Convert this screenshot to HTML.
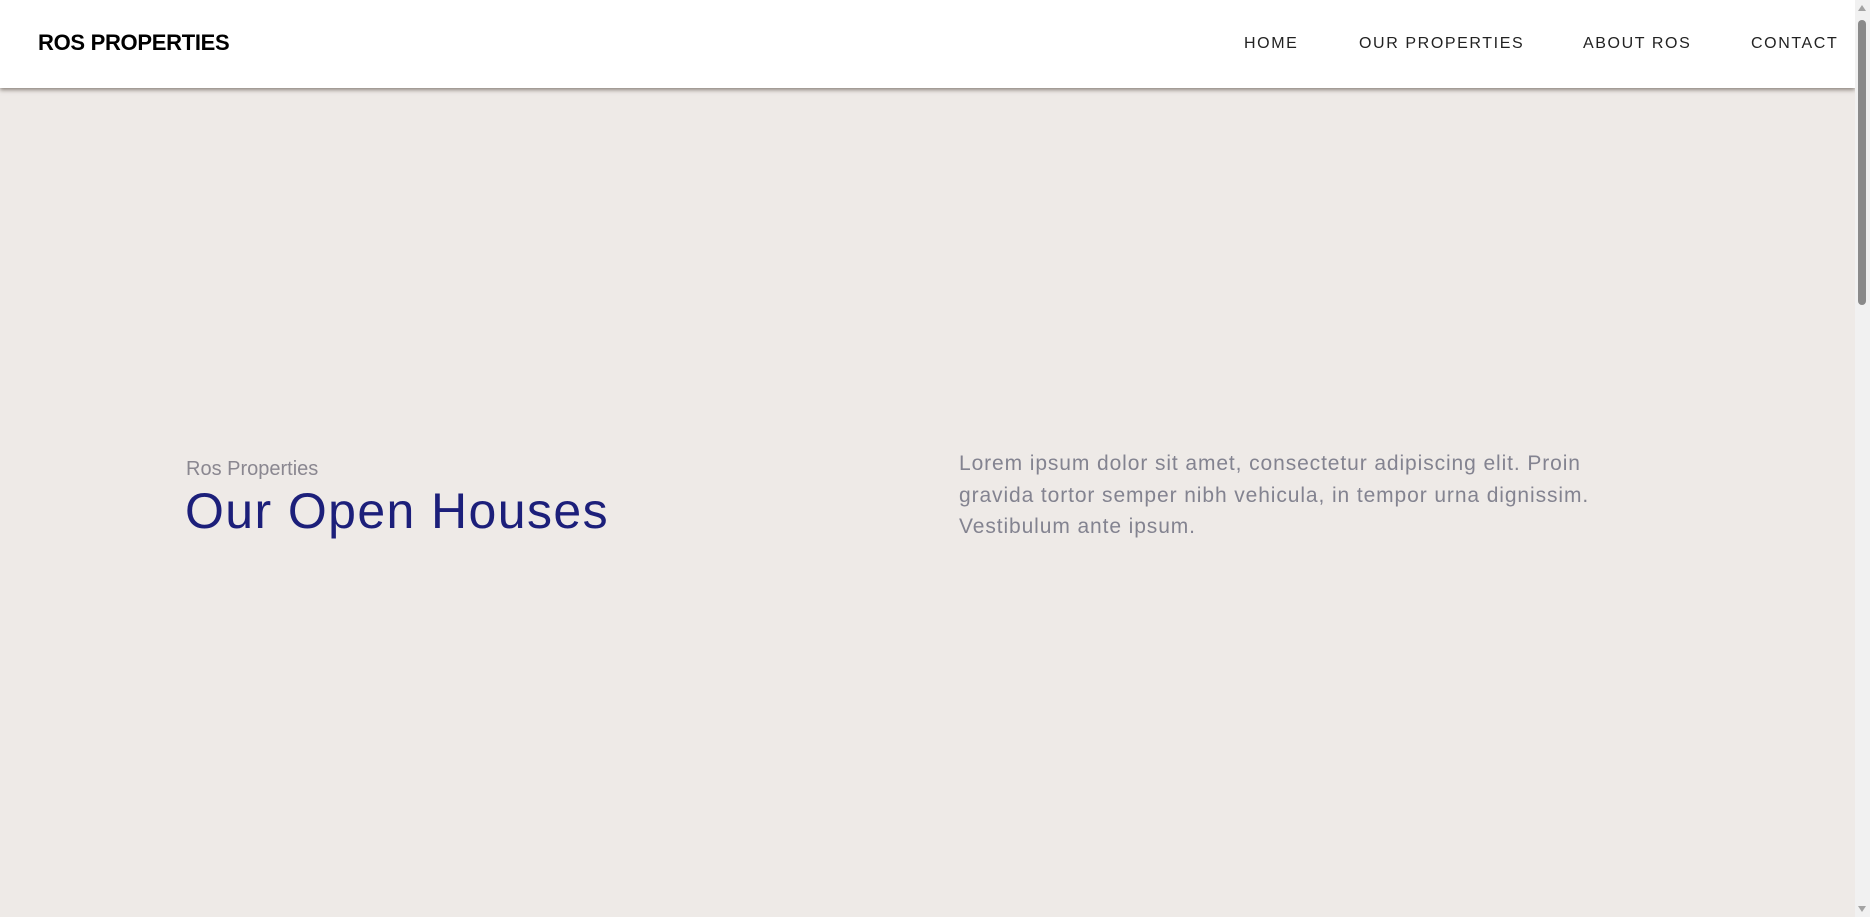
<!DOCTYPE html>
<html><head><style>
html,body{margin:0;padding:0}
body{width:1870px;height:917px;overflow:hidden;background:#eeeae7;font-family:"Liberation Sans",sans-serif;position:relative}
.hdr{position:absolute;left:0;top:0;width:1855px;height:88px;background:#fff;box-shadow:0 2px 4px rgba(60,50,40,.55)}
.logo{position:absolute;left:38px;top:30px;font-size:22px;font-weight:bold;color:#000;letter-spacing:-0.3px}
.nav{position:absolute;top:35px;font-size:16px;letter-spacing:1.6px;color:#222}
.sb{position:absolute;left:1855px;top:0;width:15px;height:917px;background:#f1f1f1}
.thumb{position:absolute;left:3px;top:20px;width:8px;height:285px;background:#8a8a8a;border-radius:4px}
.up{position:absolute;left:3px;top:5px;width:0;height:0;border-left:4px solid transparent;border-right:4px solid transparent;border-bottom:6px solid #a3a3a3}
.dn{position:absolute;left:3px;top:906px;width:0;height:0;border-left:4px solid transparent;border-right:4px solid transparent;border-top:6px solid #a3a3a3}
.sub{position:absolute;left:186px;top:458px;font-size:20px;color:#8a8790}
.h1{position:absolute;left:185px;top:482px;font-size:50px;color:#1c1f7a;letter-spacing:1.4px;font-weight:normal}
.p{position:absolute;left:959px;top:448px;width:800px;font-size:21px;line-height:31.6px;color:#838390;letter-spacing:0.9px;white-space:nowrap}
</style></head><body>
<div class="hdr">
<div class="logo">ROS PROPERTIES</div>
<div class="nav" style="left:1244px">HOME</div>
<div class="nav" style="left:1359px">OUR PROPERTIES</div>
<div class="nav" style="left:1583px">ABOUT ROS</div>
<div class="nav" style="left:1751px">CONTACT</div>
</div>
<div class="sub">Ros Properties</div>
<div class="h1">Our Open Houses</div>
<div class="p">Lorem ipsum dolor sit amet, consectetur adipiscing elit. Proin<br>gravida tortor semper nibh vehicula, in tempor urna dignissim.<br>Vestibulum ante ipsum.</div>
<div class="sb"><div class="up"></div><div class="thumb"></div><div class="dn"></div></div>
</body></html>
